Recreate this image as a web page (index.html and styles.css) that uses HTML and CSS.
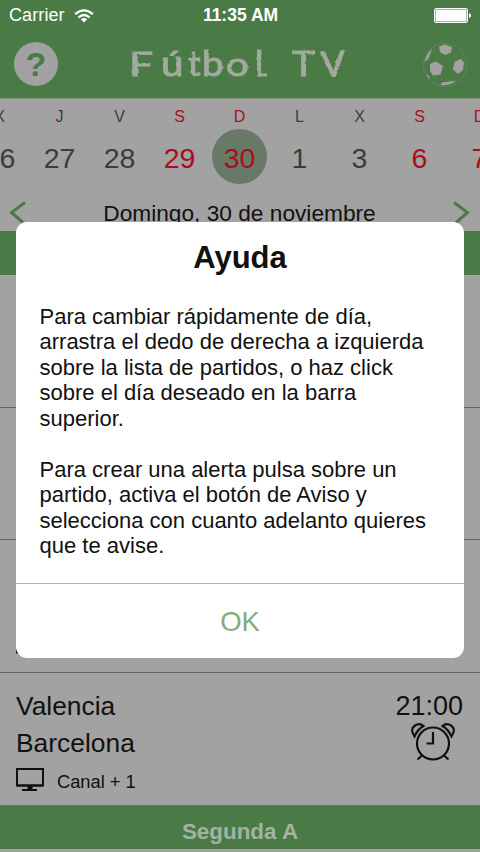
FILE: index.html
```html
<!DOCTYPE html>
<html lang="es">
<head>
<meta charset="utf-8">
<title>Fútbol TV</title>
<link rel="stylesheet" href="styles.css">
</head>
<body>
<div class="phone">
  <header class="top">
    <div class="status">
      <div class="carrier"><span>Carrier</span>
        <svg width="20" height="14" viewBox="0 0 20 14" fill="none" stroke="#fff" stroke-width="2.3"><path d="M1.2 5.1Q10-2.4 18.8 5.1M4.4 8.5Q10 3.6 15.6 8.5"/><path d="M10 13.5L6.8 10.3Q10 7.7 13.2 10.3Z" fill="#fff" stroke="none"/></svg>
      </div>
      <div class="clock">11:35 AM</div>
      <svg class="battery" width="38" height="15" viewBox="0 0 38 15"><rect x=".5" y=".5" width="33" height="14" rx="1.5" fill="none" stroke="#fff"/><rect x="1.500" y="1.500" width="31" height="12" rx=".5" fill="#fff"/><path d="M35 5q2 .5 2 2.500t-2 2.500z" fill="#fff"/></svg>
    </div>
    <div class="nav">
      <div class="help">?</div>
      <svg class="logo" width="240" height="50" viewBox="0 0 240 50" role="heading">
        <filter id="chalk" x="-5%" y="-5%" width="110%" height="110%"><feTurbulence type="fractalNoise" baseFrequency=".2" numOctaves="2" seed="4"/><feDisplacementMap in="SourceGraphic" scale="2.500"/></filter>
        <g filter="url(#chalk)" fill="#a2aaa0" stroke="#a2aaa0"><text transform="translate(9 36) scale(1.22 .95)">F</text><text transform="translate(41 36) scale(1.15 1)">ú</text><text transform="translate(68 36)">t</text><text transform="translate(82 36) scale(1.1 1)">b</text><text transform="translate(106 36) scale(1.15 .95)">o</text><text transform="translate(135 36)">l</text><path d="M139 35H147" stroke-width="3"/><text transform="translate(172 36) scale(1.12 1)">T</text><text transform="translate(202 37) rotate(-3)">V</text></g>
      </svg>
      <svg class="ball" width="46" height="46" viewBox="0 0 46 46"><circle cx="23" cy="23" r="21.500" fill="none" stroke="#a2a2a2" stroke-width=".7" opacity=".35"/><g fill="#a2a2a2"><path d="M17 4.500L23 2.500L30 5L29 10.500L23 13L18 10Z"/><path d="M8 22L14 19.500L21 24L18.500 32.500L11 33.500L8 29Z"/><path d="M33 19.500L39 17L42 20.500L41 28L36 32L30.500 27Z"/><path d="M10 7L6.500 17L2.500 20Q4 12 10 7Z"/><path d="M20 40.500L34 38.500Q28 44 18.500 43Z"/><path d="M4 32L7 34L8 37Q5 35 4 32Z"/></g></svg>
    </div>
  </header>
  <div class="days">
    <div class="day"><small>X</small><b>26</b></div>
    <div class="day"><small>J</small><b>27</b></div>
    <div class="day"><small>V</small><b>28</b></div>
    <div class="day red"><small>S</small><b>29</b></div>
    <div class="day red on"><small>D</small><b>30</b></div>
    <div class="day"><small>L</small><b>1</b></div>
    <div class="day"><small>X</small><b>3</b></div>
    <div class="day red"><small>S</small><b>6</b></div>
    <div class="day red"><small>D</small><b>7</b></div>
  </div>
  <div class="date">
    <svg width="17" height="24" viewBox="0 0 17 24"><path d="M16 2.500L2.500 12.500L14 22.500"/></svg>
    <span>Domingo, 30 de noviembre</span>
    <svg width="17" height="24" viewBox="0 0 17 24"><path d="M1 2.500L14.500 12.500L3 22.500"/></svg>
  </div>
  <div class="section"></div>
  <div class="match"></div>
  <div class="match"></div>
  <div class="match">
    <div class="teams"><svg class="tv covered" width="28" height="24" viewBox="0 0 28 24"><path d="M1 1H27V17.500H1Z" fill="none" stroke="#111" stroke-width="2"/></svg></div>
  </div>
  <div class="match">
    <div class="teams">
      <div class="team">Valencia</div>
      <div class="team">Barcelona</div>
      <div class="channel"><svg class="tv" width="28" height="24" viewBox="0 0 28 24"><path d="M1 1H27V17.500H1Z" fill="none" stroke="#111" stroke-width="2"/><path d="M1 16.500H27V18.500H1ZM11.500 18H16.500V21H21V23H6V21H11.500Z" fill="#111"/></svg><span>Canal + 1</span></div>
    </div>
    <div class="when">
      <div class="hour">21:00</div>
      <svg class="alarm" width="46" height="40" viewBox="0 0 46 40" fill="none" stroke="#111" stroke-width="2.200"><circle cx="23" cy="21.500" r="16"/><path d="M23 10V21.500H16.500M12.500 33L7.500 37.500M33.500 33L38.500 37.500"/><path d="M4.500 14.500Q-.5 7 5 3.500Q9.500 .5 13.500 4Q7.500 7.500 4.500 14.500ZM41.500 14.500Q46.500 7 41 3.500Q36.500 .5 32.500 4Q38.500 7.500 41.500 14.500Z"/></svg>
    </div>
  </div>
  <div class="section last">Segunda A</div>

  <div class="dialog">
    <h2>Ayuda</h2>
    <div class="copy">
      <p>Para cambiar rápidamente de día,<br>arrastra el dedo de derecha a izquierda<br>sobre la lista de partidos, o haz click<br>sobre el día deseado en la barra<br>superior.</p>
      <p>Para crear una alerta pulsa sobre un<br>partido, activa el botón de Aviso y<br>selecciona con cuanto adelanto quieres<br>que te avise.</p>
    </div>
    <div class="ok">OK</div>
  </div>
</div>
</body>
</html>
```
FILE: styles.css
```css
* { box-sizing: border-box; }
body { margin: 0; font-family: "Liberation Sans", sans-serif; background: #a2a2a2; }
.phone { position: relative; width: 480px; height: 852px; overflow: hidden; background: #a2a2a2; color: #111; }
svg { display: block; flex: none; }
.top { height: 99px; background: #4a7b47; border-bottom: 1px solid #7f977d; }
.status { height: 31px; display: grid; grid-template-columns: 1fr auto 1fr; align-items: center; padding: 0 8px 0 9px; color: #fff; font-size: 18px; line-height: 31px; }
.carrier { display: flex; align-items: center; gap: 9px; letter-spacing: .1px; }
.clock { font-weight: bold; font-size: 17.5px; }
.battery { justify-self: end; }
.nav { display: flex; justify-content: space-between; align-items: center; height: 67px; padding: 0 12px 0 14px; }
.help { width: 44px; height: 44px; margin-top: -1px; border-radius: 50%; background: #a2a2a2; color: #4a7b47; font: bold 34px/44px "Liberation Sans", sans-serif; text-align: center; }
.logo text { font: 400 35px Lato, sans-serif; stroke-width: 1; }
.days { height: 96px; display: flex; width: 540px; margin-left: -30.5px; }
.day { width: 60px; flex: none; display: flex; flex-direction: column; align-items: center; color: #3c3c3c; }
.day small { font-size: 16px; line-height: 18px; margin-top: 9px; }
.day b { width: 55px; height: 55px; margin-top: 3px; border-radius: 50%; text-align: center; font-weight: normal; font-size: 28.5px; line-height: 58px; }
.day.red { color: #a90f1b; }
.day.on b { background: #697968; }
.date { height: 36px; display: flex; justify-content: space-between; padding: 5px 10px 0 9px; font-size: 22.7px; line-height: 26px; }
.date path { fill: none; stroke: #4a7b47; stroke-width: 3; }
.section { height: 44px; background: #4a7b47; }
.last { border-top: 1px solid #687668; color: #a2b3a0; font-weight: bold; font-size: 22.4px; line-height: 52px; text-align: center; }
.match { height: 132.6px; display: flex; justify-content: space-between; padding: 15px 17px 0 16px; border-bottom: 1px solid #666; }
.match:nth-last-child(3) { border-bottom: 0; height: 132px; }
.team { font-size: 26.4px; line-height: 37.5px; }
.channel { display: flex; align-items: center; gap: 13px; font-size: 18.3px; line-height: 24px; margin-top: 4px; }
.channel span { padding-top: 3px; }
.covered { margin-top: 80px; }
.hour { font-size: 27px; line-height: 37px; }
.when { display: flex; flex-direction: column; align-items: flex-end; }
.alarm { margin-right: 7px; margin-top: -3px; }
.dialog { position: absolute; left: 16px; top: 222px; width: 448px; height: 436px; border-radius: 11px; background: #fff; display: flex; flex-direction: column; }
.dialog h2 { margin: 17px 0 0; text-align: center; font-size: 31px; line-height: 38px; }
.copy { padding: 26.5px 0 0 23.5px; height: 306px; font-size: 22px; line-height: 25.55px; white-space: nowrap; }
.copy p { margin: 0 0 25.55px; }
.ok { height: 75px; border-top: 1px solid #b2b2b2; text-align: center; color: #7eae7c; font-size: 27.5px; line-height: 76px; }
```
